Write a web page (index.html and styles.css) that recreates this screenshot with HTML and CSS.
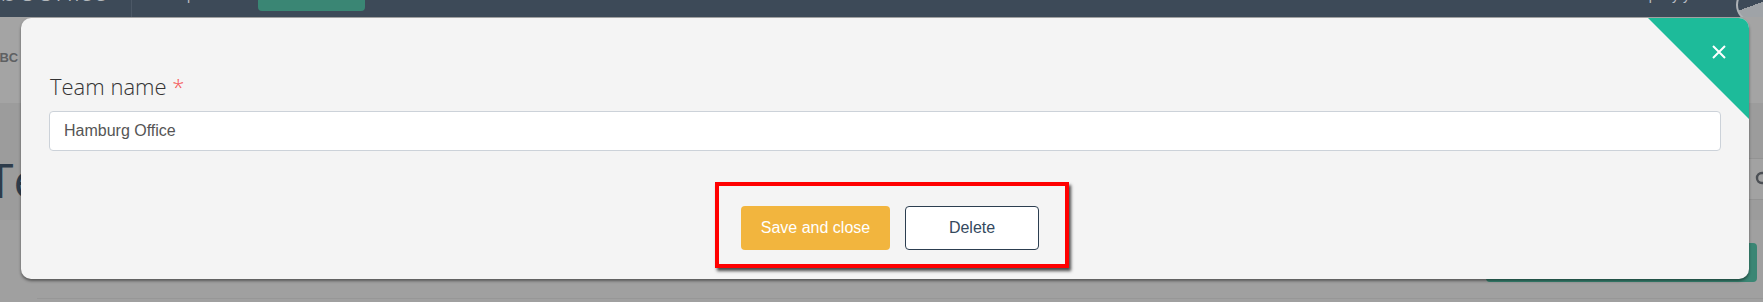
FILE: index.html
```html
<!DOCTYPE html>
<html lang="en">
<head>
<meta charset="utf-8">
<title>Team</title>
<link rel="stylesheet" href="styles.css">
</head>
<body>
<div class="app">
  <header class="topbar">
    <div class="logo">booniss</div>
    <div class="divider"></div>
    <div class="nav-link">Helpdesk</div>
    <div class="nav-btn"></div>
    <div class="spacer"></div>
    <div class="user">Company y</div>
    <div class="avatar"></div>
  </header>
  <div class="subbar"><span class="crumb">ABC Inc</span></div>
  <div class="titlebar">
    <h1 class="page-title">Teams</h1>
    <div class="search">
      <svg class="search-icon" width="16" height="16" viewBox="0 0 16 16"><circle cx="7" cy="7" r="5" fill="none" stroke="#4b4f54" stroke-width="2.4"/><path d="M10.5 10.5 L14.5 14.5" stroke="#4b4f54" stroke-width="2.6" stroke-linecap="round"/></svg>
    </div>
  </div>
  <div class="content">
    <div class="content-actions"><div class="add-btn"></div></div>
    <div class="table-line"></div>
  </div>

  <div class="overlay">
    <div class="modal">
      <div class="corner"></div>
      <svg class="close" width="14" height="14" viewBox="0 0 14 14"><path d="M1 1 L13 13 M13 1 L1 13" stroke="#ffffff" stroke-width="2"/></svg>
      <label class="field-label">Team name <span class="req">*</span></label>
      <input class="field-input" type="text" value="Hamburg Office">
      <div class="footer">
        <div class="highlight">
          <button class="btn btn-save">Save and close</button>
          <button class="btn btn-delete">Delete</button>
        </div>
      </div>
    </div>
  </div>
</div>
</body>
</html>
```

FILE: styles.css
```css
html, body {
  margin: 0;
  padding: 0;
}
body {
  width: 1763px;
  height: 302px;
  overflow: hidden;
  background: #a0a0a0;
  font-family: "Liberation Sans", Arial, sans-serif;
}
.app {
  position: relative;
  width: 1763px;
  height: 302px;
  overflow: hidden;
}
.topbar {
  height: 17px;
  background: #3d4a58;
  display: flex;
  align-items: flex-start;
  overflow: hidden;
}
.logo {
  width: 137px;
  margin-top: -28px;
  margin-left: -6px;
  font-family: "Lato", sans-serif;
  font-weight: 300;
  font-size: 33px;
  line-height: 33px;
  color: #b3b8bd;
  flex: none;
  padding-left: 6px;
  box-sizing: border-box;
  overflow: hidden;
}
.divider {
  width: 1px;
  height: 17px;
  background: #4c5866;
  flex: none;
}
.nav-link {
  width: 92px;
  margin-left: 34px;
  margin-top: -12px;
  font-size: 14px;
  line-height: 14px;
  color: #b9bec4;
  flex: none;
}
.nav-btn {
  width: 107px;
  height: 11px;
  background: #3a8674;
  border-radius: 0 0 4px 4px;
  flex: none;
}
.spacer { flex: 1; }
.user {
  margin-top: -12px;
  font-size: 14px;
  line-height: 14px;
  color: #b9bec4;
  margin-right: 46px;
}
.avatar {
  width: 32px;
  height: 32px;
  margin-top: -13px;
  margin-right: -9px;
  border-radius: 50%;
  border: 2px solid #aeb2b6;
  background: linear-gradient(160deg, #3d4a58 50%, #9fa3a7 50%);
  flex: none;
}
.subbar {
  height: 86px;
  background: #a4a4a4;
  display: flex;
  align-items: center;
}
.crumb {
  margin-left: -10px;
  margin-top: -6px;
  font-size: 13px;
  font-weight: bold;
  color: #5e6062;
}
.titlebar {
  height: 117px;
  background: #9c9c9c;
  display: flex;
  align-items: flex-start;
  justify-content: space-between;
}
.page-title {
  margin: 47px 0 0 -13px;
  font-family: "Open Sans", sans-serif;
  font-weight: 400;
  font-size: 48px;
  line-height: 60px;
  color: #2e3c4b;
}
.search {
  margin-top: 55px;
  margin-right: -40px;
  width: 300px;
  height: 42px;
  border-top: 1px solid #939393;
  border-bottom: 1px solid #939393;
  background: #a2a2a2;
  display: flex;
  align-items: center;
  justify-content: flex-end;
  padding-right: 32px;
  box-sizing: border-box;
}
.content {
  display: flex;
  flex-direction: column;
}
.content-actions {
  display: flex;
  justify-content: flex-end;
  padding: 23px 6px 0 0;
}
.add-btn {
  width: 271px;
  height: 39px;
  border-radius: 4px;
  background: #3a8674;
}
.table-line {
  margin: 16px 0 0 37px;
  height: 1px;
  background: #979797;
}
.overlay {
  position: absolute;
  left: 0;
  top: 0;
  right: 0;
  bottom: 0;
  padding: 18px 14px 0 21px;
}
.modal {
  position: relative;
  height: 261px;
  box-sizing: border-box;
  background: #f4f4f4;
  border-radius: 10px;
  box-shadow: 0 2px 3px rgba(0, 0, 0, 0.45);
  padding: 54px 28px 0 28px;
  overflow: hidden;
  display: flex;
  flex-direction: column;
}
.corner {
  position: absolute;
  top: 0;
  right: 0;
  width: 101px;
  height: 101px;
  background: #1dbb9a;
  clip-path: polygon(0 0, 100% 0, 100% 100%);
}
.close {
  position: absolute;
  top: 27px;
  right: 23px;
}
.field-label {
  display: block;
  font-family: "Open Sans", sans-serif;
  font-weight: 300;
  font-size: 22px;
  line-height: 29px;
  color: #333333;
  margin: 0 0 10px 1px;
}
.req {
  color: #f55454;
  font-weight: 300;
}
.field-input {
  display: block;
  box-sizing: border-box;
  width: 100%;
  height: 40px;
  margin: 0;
  border: 1px solid #ccd2d9;
  border-radius: 4px;
  background: #ffffff;
  padding: 0 14px;
  font-family: "Liberation Sans", Arial, sans-serif;
  font-size: 16px;
  color: #555555;
  outline: none;
}
.footer {
  margin-top: 31px;
  display: flex;
  justify-content: center;
}
.highlight {
  margin-left: 14px;
  border: 4px solid #ff0000;
  padding: 20px 26px 14px 22px;
  box-shadow: 2px 3px 3px rgba(0, 0, 0, 0.7);
  display: flex;
  gap: 15px;
}
.btn {
  height: 44px;
  border-radius: 4px;
  font-family: "Liberation Sans", Arial, sans-serif;
  font-size: 16px;
  margin: 0;
  padding: 0;
  cursor: pointer;
}
.btn-save {
  width: 149px;
  background: #f2b53e;
  border: none;
  color: #ffffff;
}
.btn-delete {
  width: 134px;
  background: #ffffff;
  border: 1px solid #2c3e50;
  color: #34495e;
}
```
